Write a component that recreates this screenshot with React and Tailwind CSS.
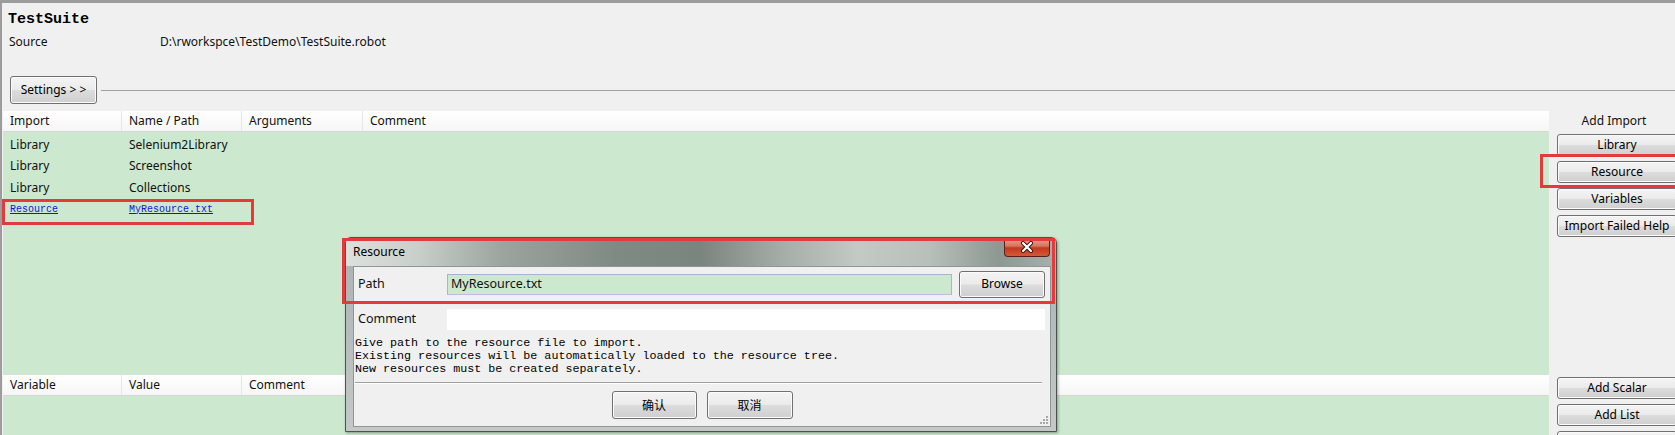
import React from "react";

const winBtn =
  "flex items-center justify-center border border-[#707070] rounded-[3px] bg-[linear-gradient(#f4f4f4_0%,#ebebeb_48%,#dcdcdc_52%,#cfcfcf_100%)] shadow-[inset_0_0_0_1px_#fbfbfb] text-[12px] text-black";

const imports = [
  { type: "Library", name: "Selenium2Library" },
  { type: "Library", name: "Screenshot" },
  { type: "Library", name: "Collections" },
];

const HeaderRow = ({ cols }) => (
  <div className="grid grid-cols-[119px_120px_121px_1fr] h-[21px] bg-[linear-gradient(#ffffff,#f6f6f6)] border-b border-[#d6d6d6]">
    {cols.map((c, i) => (
      <div
        key={i}
        className="px-[7px] flex items-center border-r border-[#e6e6e6] last:border-r-0"
      >
        {c}
      </div>
    ))}
  </div>
);

const ResourceDialog = () => (
  <div className="absolute left-[343px] top-[234px] w-[712px] h-[195px] rounded-t-[6px] border border-[#4b5250] bg-[linear-gradient(#aab1b0,#c4c9c8)] shadow-[1px_1px_3px_rgba(0,0,0,0.35)] flex flex-col">
    {/* title bar, blurred aero glass */}
    <div className="relative h-[28px] rounded-t-[5px] bg-[linear-gradient(90deg,#dde1dd_0%,#c9cfcb_10%,#9ba49f_22%,#808a85_38%,#7b8580_50%,#a7afaa_62%,#c3c9c5_72%,#b9c0bb_82%,#8d9892_92%,#a9b1ad_100%)] flex items-center pl-[7px] text-[12px] text-black">
      Resource
      <div className="absolute right-[6px] top-0 w-[46px] h-[19px] rounded-b-[4px] border border-[#5a2018] border-t-0 bg-[linear-gradient(#e9a793_0%,#d9745c_45%,#c4381c_55%,#d35a3a_100%)] flex items-center justify-center">
        <svg width="14" height="12" viewBox="0 0 14 12">
          <path d="M3 2 L11 10 M11 2 L3 10" stroke="#3a1410" strokeWidth="4" strokeLinecap="round" />
          <path d="M3 2 L11 10 M11 2 L3 10" stroke="#ffffff" strokeWidth="2.2" strokeLinecap="round" />
        </svg>
      </div>
    </div>
    {/* content */}
    <div className="relative flex-1 ml-[7px] mr-[5px] mb-[4px] bg-[#f0f0f0] border border-[#8f9696] flex flex-col text-[12.5px]">
      <div className="flex items-center h-[34px] pl-[4px]">
        <span className="w-[89px]">Path</span>
        <div className="w-[505px] h-[21px] bg-[#cce8cf] border border-[#a3b8cc] border-b-[#c7b7e6] flex items-center pl-[3px]">
          MyResource.txt
        </div>
        <div className={`${winBtn} ml-[7px] w-[86px] h-[27px] text-[12.5px]`}>Browse</div>
      </div>
      <div className="flex items-center h-[36px] pl-[4px]">
        <span className="w-[89px]">Comment</span>
        <div className="w-[598px] h-[21px] bg-white" />
      </div>
      <div className="pl-[1px] font-['Liberation_Mono',monospace] text-[11.7px] leading-[13px] text-black">
        <div>Give path to the resource file to import.</div>
        <div>Existing resources will be automatically loaded to the resource tree.</div>
        <div>New resources must be created separately.</div>
      </div>
      <div className="mt-[6px] ml-[1px] mr-[8px] h-[2px] border-t border-[#a0a0a0] border-b border-b-white" />
      <div className="flex justify-center gap-[10px] mt-[7px] font-['Noto_Sans_CJK_SC',sans-serif]">
        <div className={`${winBtn} w-[85px] h-[28px]`}>确认</div>
        <div className={`${winBtn} w-[86px] h-[28px]`}>取消</div>
      </div>
      <div className="absolute right-[2px] bottom-[2px] grid grid-cols-3 gap-[1px]">
        {[0, 1, 2, 3, 4, 5, 6, 7, 8].map((i) => (
          <div
            key={i}
            className={`w-[2px] h-[2px] ${
              [2, 4, 5, 6, 7, 8].includes(i) ? "bg-[#a8a8a8]" : "bg-transparent"
            }`}
          />
        ))}
      </div>
    </div>
  </div>
);

export default function App() {
  return (
    <div className="relative w-[1675px] h-[435px] overflow-hidden bg-[#f0f0f0] border-t-[3px] border-l-2 border-[#9c9c9c] font-['Noto_Sans',sans-serif] text-[12px] text-[#111]">
      {/* suite header */}
      <div className="pl-[6px] pt-[9px]">
        <div className="font-['Liberation_Mono',monospace] font-bold text-[15px] leading-[16px] text-black">
          TestSuite
        </div>
        <div className="flex items-center h-[16px] mt-[6px]">
          <span className="w-[152px] pl-[1px]">Source</span>
          <span>D:\rworkspce\TestDemo\TestSuite.robot</span>
        </div>
      </div>

      <div className="flex items-center h-[28px] mt-[26px] pl-[8px]">
        <div className={`${winBtn} w-[87px] h-[28px]`}>Settings &gt; &gt;</div>
        <div className="flex-1 h-px bg-[#a0a0a0] ml-[4px]" />
      </div>

      {/* imports + variables */}
      <div className="flex mt-[7px]">
        <div className="flex-1 ml-px flex flex-col">
          <HeaderRow cols={["Import", "Name / Path", "Arguments", "Comment"]} />
          <div className="h-[243px] bg-[#cce8cf] pt-[2px]">
            {imports.map((r, i) => (
              <div key={i} className="grid grid-cols-[119px_120px_121px_1fr] h-[21.5px] items-center">
                <span className="px-[7px]">{r.type}</span>
                <span className="px-[7px]">{r.name}</span>
              </div>
            ))}
            <div className="grid grid-cols-[119px_120px_121px_1fr] h-[21.5px] items-center font-['Liberation_Mono',monospace] text-[10px] text-[#1515d8] underline">
              <span className="px-[7px]">Resource</span>
              <span className="px-[7px]">MyResource.txt</span>
            </div>
          </div>
          <HeaderRow cols={["Variable", "Value", "Comment", ""]} />
          <div className="h-[60px] bg-[#cce8cf]" />
        </div>

        <div className="w-[126px] pl-[8px] flex flex-col">
          <div className="h-[264px] flex flex-col">
            <div className="h-[20px] flex items-center justify-center pr-[4px]">Add Import</div>
            <div className="flex flex-col gap-[5px] mt-[3px]">
              <div className={`${winBtn} w-[120px] h-[22px]`}>Library</div>
              <div className={`${winBtn} w-[120px] h-[22px]`}>Resource</div>
              <div className={`${winBtn} w-[120px] h-[22px]`}>Variables</div>
              <div className={`${winBtn} w-[120px] h-[22px] whitespace-nowrap text-[12.5px]`}>Import Failed Help</div>
            </div>
          </div>
          <div className="flex flex-col gap-[5px] mt-[2px]">
            <div className={`${winBtn} w-[120px] h-[22px]`}>Add Scalar</div>
            <div className={`${winBtn} w-[120px] h-[22px]`}>Add List</div>
            <div className={`${winBtn} w-[120px] h-[22px]`} />
          </div>
        </div>
      </div>

      <ResourceDialog />

      {/* red highlight boxes */}
      <div className="absolute left-0 top-[196px] w-[252px] h-[26px] border-[3px] border-[#e43a3c]" />
      <div className="absolute left-[1538px] top-[151px] w-[145px] h-[34px] border-[3px] border-[#e43a3c]" />
      <div className="absolute left-[340px] top-[235px] w-[713px] h-[66px] border-[3px] border-[#e43a3c]" />
    </div>
  );
}
